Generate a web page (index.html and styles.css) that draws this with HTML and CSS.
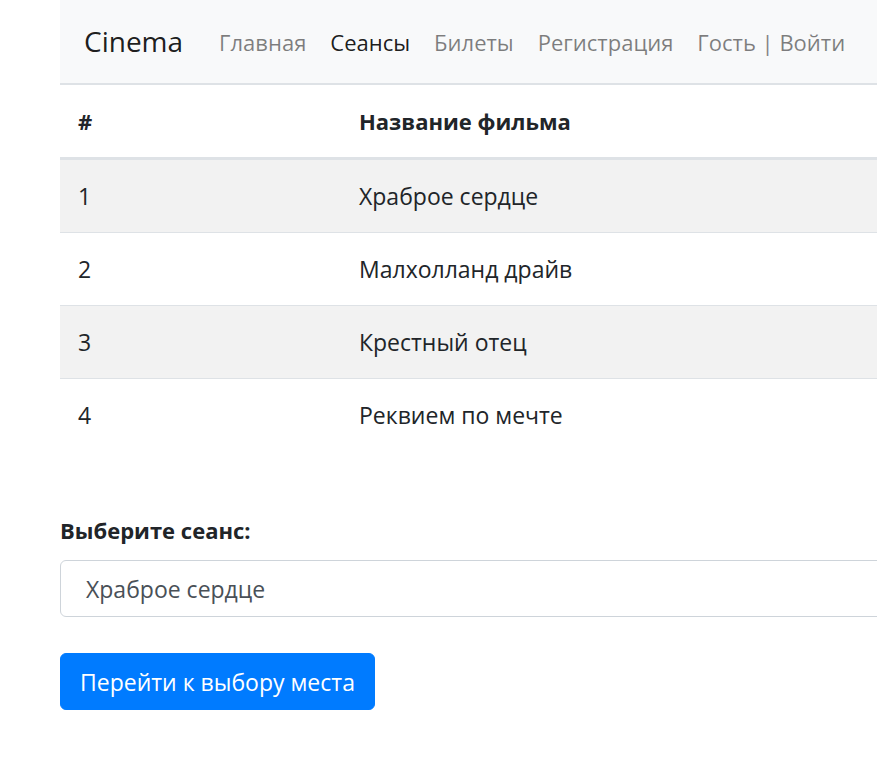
FILE: index.html
```html
<!DOCTYPE html>
<html lang="ru">
<head>
<meta charset="utf-8">
<title>Cinema</title>
<link rel="stylesheet" href="styles.css">
</head>
<body>
<div class="page">
  <nav class="navbar">
    <a class="brand" href="#">Cinema</a>
    <ul class="nav">
      <li><a class="nav-link" href="#">Главная</a></li>
      <li><a class="nav-link active" href="#">Сеансы</a></li>
      <li><a class="nav-link" href="#">Билеты</a></li>
      <li><a class="nav-link" href="#">Регистрация</a></li>
      <li><a class="nav-link" href="#">Гость | Войти</a></li>
    </ul>
  </nav>
  <table class="table">
    <thead>
      <tr><th class="col-num">#</th><th>Название фильма</th></tr>
    </thead>
    <tbody>
      <tr><td>1</td><td>Храброе сердце</td></tr>
      <tr><td>2</td><td>Малхолланд драйв</td></tr>
      <tr><td>3</td><td>Крестный отец</td></tr>
      <tr><td>4</td><td>Реквием по мечте</td></tr>
    </tbody>
  </table>
  <form class="form">
    <label class="label" for="session">Выберите сеанс:</label>
    <div class="select" id="session">Храброе сердце</div>
    <button type="button" class="btn">Перейти к выбору места</button>
  </form>
</div>
</body>
</html>
```
FILE: styles.css
```css
html, body {
  margin: 0;
  padding: 0;
  overflow: hidden;
  background: #fff;
}
body {
  font-family: "Open Sans", "Noto Sans", sans-serif;
  font-size: 23px;
  line-height: 36px;
  color: #212529;
}
.page {
  margin-left: 60px;
  width: 1000px;
}
.navbar {
  display: flex;
  align-items: center;
  height: 83px;
  padding: 0 24px;
  background: #f8f9fa;
}
.brand {
  font-size: 28px;
  line-height: 45px;
  color: rgba(0, 0, 0, 0.9);
  text-decoration: none;
  margin-right: 24px;
}
.nav {
  display: flex;
  list-style: none;
  margin: 0;
  padding: 0;
}
.nav-link {
  display: block;
  padding: 0 12px;
  font-size: 22px;
  color: rgba(0, 0, 0, 0.5);
  text-decoration: none;
}
.nav-link.active {
  color: rgba(0, 0, 0, 0.9);
}
.table {
  width: 100%;
  border-collapse: collapse;
}
.table th,
.table td {
  text-align: left;
  padding: 18px;
  line-height: 36px;
  vertical-align: top;
}
.table th {
  font-size: 22px;
  font-weight: 700;
  border-top: 2px solid #dee2e6;
  border-bottom: 3px solid #dee2e6;
  vertical-align: bottom;
}
.table td {
  border-top: 1px solid #dee2e6;
}
.col-num {
  width: 245px;
}
.table tbody tr:nth-child(odd) {
  background: #f2f2f2;
}
.form {
  margin-top: 61px;
}
.label {
  display: block;
  font-size: 22px;
  font-weight: 700;
  margin-bottom: 12px;
}
.select {
  box-sizing: border-box;
  height: 57px;
  display: flex;
  align-items: center;
  padding: 0 25px;
  border: 1px solid #ced4da;
  border-radius: 6px;
  color: #495057;
  background: #fff;
}
.btn {
  margin-top: 36px;
  box-sizing: border-box;
  height: 57px;
  padding: 0 19px;
  border: 1px solid #007bff;
  border-radius: 6px;
  background: #007bff;
  color: #fff;
  font-family: inherit;
  font-size: 23px;
  line-height: 36px;
  cursor: pointer;
}
```
